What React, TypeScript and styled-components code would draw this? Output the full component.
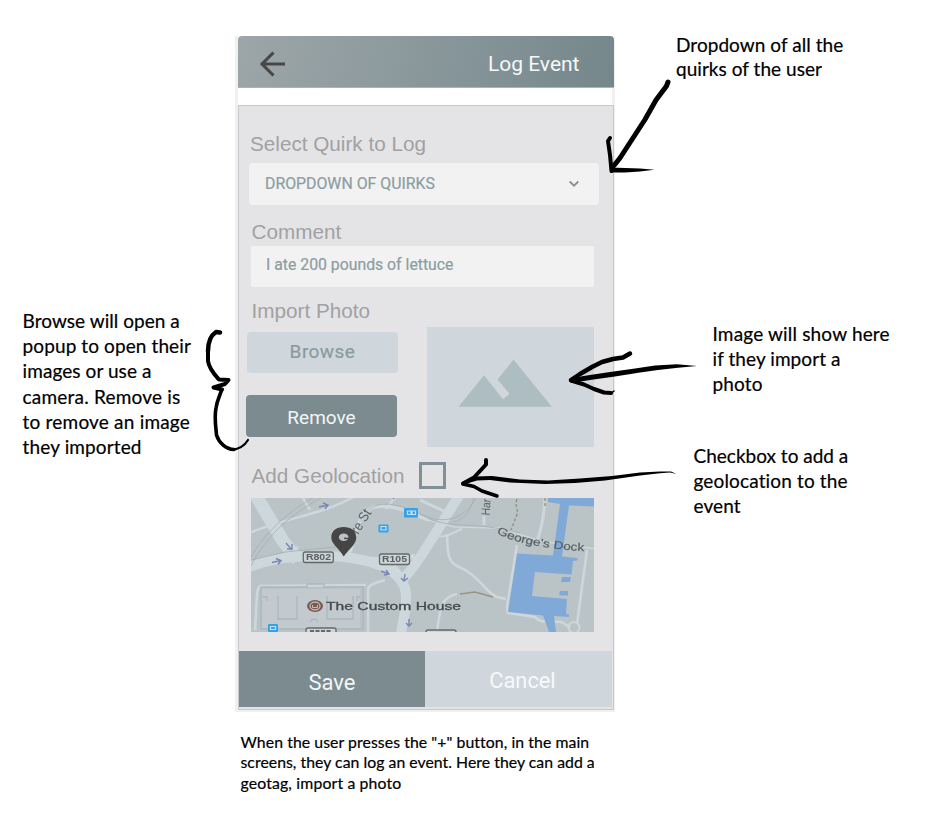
import React from 'react';
import styled, { createGlobalStyle, css } from 'styled-components';

const colors = {
  panel: '#e4e4e6',
  field: '#f2f2f2',
  slate: '#7b8b90',
  mist: '#cfd7dd',
  label: '#a1a1a2',
  value: '#8c9da1',
};

const GlobalStyle = createGlobalStyle`
  * { box-sizing: border-box; }
  body { margin: 0; background: #fff; }
`;

const Page = styled.main`
  position: relative;
  width: 926px;
  height: 830px;
  overflow: hidden;
  background: #fff;
`;

const Stage = styled.div`
  display: grid;
  grid-template-columns: 235px 380px 1fr;
  padding-top: 36px;
  height: 712px;
`;

/* ---- annotations ---- */

const LeftNotes = styled.aside`
  padding: 272px 0 0 22.6px;
`;

const RightNotes = styled.aside`
  display: flex;
  flex-direction: column;
  margin-top: -3px;
`;

const NoteBlock = styled.p<{ $size?: number; $leading: number; $indent?: number; $gap?: number }>`
  display: flex;
  flex-direction: column;
  margin: ${p => p.$gap ?? 0}px 0 0 ${p => p.$indent ?? 0}px;
  font-family: Lato, 'Liberation Sans', sans-serif;
  font-size: ${p => p.$size ?? 19}px;
  line-height: ${p => p.$leading}px;
  color: #000;
  -webkit-text-stroke: 0.2px #000;
`;

const NoteLine = styled.span<{ $tracking: number }>`
  white-space: nowrap;
  letter-spacing: ${p => p.$tracking}px;
`;

type Line = [text: string, tracking: number];

function Note({ lines, ...rest }: { lines: Line[]; $size?: number; $leading: number; $indent?: number; $gap?: number }) {
  return (
    <NoteBlock {...rest}>
      {lines.map(([text, tracking]) => (
        <NoteLine key={text} $tracking={tracking}>{text}</NoteLine>
      ))}
    </NoteBlock>
  );
}

/* ---- phone ---- */

const Phone = styled.section`
  display: flex;
  flex-direction: column;
  height: 676px;
  padding: 0 1px 2px 3px;
  background: #f0f0f0;
`;

const HeaderBack = styled.div`
  background: #fff;
  flex: none;
`;

const Header = styled.header`
  display: flex;
  align-items: center;
  justify-content: space-between;
  height: 52px;
  padding: 5px 34.5px 0 21px;
  border-radius: 4px 4px 0 0;
  border-bottom: 1px solid #a9b4b8;
  background: linear-gradient(105deg, #9da6a8 0%, #8a989c 48%, #75878c 100%);
`;

const Title = styled.h1`
  margin: 0;
  font: 400 21px/28px Roboto, sans-serif;
  color: #f6f8f8;
`;

const Strip = styled.div`
  height: 17px;
  width: 374px;
  background: #fff;
  flex: none;
`;

const Body = styled.div`
  display: flex;
  flex-direction: column;
  flex: 1;
  width: 376px;
  border: 1.5px solid #c8c8ce;
  background: ${colors.panel};
`;

const Form = styled.form`
  display: flex;
  flex-direction: column;
  height: 545px;
  padding: 25px 0 0 12.5px;
`;

const Label = styled.label<{ $gap?: number; $shift?: number }>`
  margin: ${p => p.$gap ?? 0}px 0 0 ${p => p.$shift ?? 0}px;
  font: 400 20.7px/26px 'Liberation Sans', Arial, sans-serif;
  color: ${colors.label};
  white-space: nowrap;
`;

const fieldBox = css`
  display: flex;
  align-items: center;
  justify-content: space-between;
  background: ${colors.field};
  font-family: Roboto, sans-serif;
  font-weight: 400;
  color: ${colors.value};
  -webkit-text-stroke: 0.2px ${colors.value};
`;

const Select = styled.div`
  ${fieldBox}
  width: 350px;
  height: 42px;
  margin: 6px 0 0 -2.5px;
  padding: 0 19px 2px 16px;
  border-radius: 4px;
  font-size: 15.85px;
`;

const TextField = styled.div`
  ${fieldBox}
  width: 343px;
  height: 41px;
  margin: 1px 0 0 -0.5px;
  padding: 0 15px 4px 15px;
  border-radius: 2px;
  font-size: 15.8px;
`;

const PhotoRow = styled.div`
  display: flex;
  align-items: flex-start;
  height: 120px;
  margin-top: 3px;
`;

const Buttons = styled.div`
  display: flex;
  flex-direction: column;
  gap: 22px;
  width: 181px;
  padding-top: 4.5px;
  margin-left: -5.5px;
`;

const Button = styled.button<{ $solid?: boolean }>`
  width: 151px;
  height: ${p => (p.$solid ? 42 : 41)}px;
  margin: 0 0 0 ${p => (p.$solid ? 0 : 1)}px;
  padding: ${p => (p.$solid ? '4px 0 0' : '0')};
  border: 0;
  border-radius: 4px;
  background: ${p => (p.$solid ? colors.slate : colors.mist)};
  color: ${p => (p.$solid ? '#f3f6f6' : '#8a9ba0')};
  font: 400 19px/24px Roboto, sans-serif;
  letter-spacing: ${p => (p.$solid ? 0 : 0.45)}px;
  -webkit-text-stroke: ${p => (p.$solid ? '0' : '0.2px #8a9ba0')};
`;

const PhotoFrame = styled.div`
  width: 167px;
  height: 120px;
  background: ${colors.mist};
`;

const GeoRow = styled.div`
  display: flex;
  align-items: center;
  height: 27px;
  margin: 15px 0 9px;
`;

const Checkbox = styled.span`
  width: 27px;
  height: 27px;
  margin-left: 14.5px;
  border: 3px solid #7f9096;
`;

const MapFrame = styled.div`
  width: 343px;
  height: 134px;
  margin-left: -1px;
  overflow: hidden;
`;

const Actions = styled.div`
  display: grid;
  grid-template-columns: 186px 187px;
  height: 56px;
  width: 373px;
`;

const Action = styled.button<{ $primary?: boolean }>`
  border: 0;
  padding: ${p => (p.$primary ? '7px 0 0' : '3px 0 0 8px')};
  background: ${p => (p.$primary ? colors.slate : colors.mist)};
  color: ${p => (p.$primary ? '#f3f5f5' : '#f6f9fa')};
  font: 400 ${p => (p.$primary ? 22 : 21.8)}px/28px Roboto, sans-serif;
`;

const Sketch = styled.svg`
  position: absolute;
  inset: 0;
  pointer-events: none;
`;

const BackArrow = () => (
  <svg width="27" height="26" viewBox="0 0 27 26" fill="none" stroke="#474747" strokeWidth="3.1">
    <path d="M26 13H4M14.5 1.5 3 13l11.5 11.5" />
  </svg>
);

const Chevron = () => (
  <svg width="12" height="8" viewBox="0 0 12 8" fill="none" stroke="#8b8f91" strokeWidth="1.8">
    <path d="M1.7 2.5 6 6.700l4.300-4.200" />
  </svg>
);

const Mountains = () => (
  <svg width="167" height="120" viewBox="427 327 167 120">
    <path fill="#aebdc1" d="M458.5 406.7 484 375.2 503 399.2 509.5 393.8 497.5 379.5 513.5 359.5 551.8 406.7Z" />
  </svg>
);

function StreetMap() {
  return (
    <svg width="343" height="134" viewBox="251 498 343 134" preserveAspectRatio="none">
      <defs>
        <filter id="soft" x="0" y="0" width="100%" height="100%">
          <feGaussianBlur stdDeviation="0.5" />
        </filter>
      </defs>
      <rect x="251" y="498" width="343" height="134" fill="#bac4c7" />
      <g filter="url(#soft)">
        {/* roads */}
        <g fill="none" stroke="#cdd8dc">
          <path strokeWidth="13" d="M255 494 283 541 298 560" />
          <path strokeWidth="10" d="M249 567C275 557 310 554 345 557C375 561 405 571 406 595C407 612 402 622 401 634" />
          <path strokeWidth="10" d="M403 579C416 566 428 545 460 494" />
          <path strokeWidth="5" d="M345 557C372 560 400 561 415 556" />
          <path strokeWidth="2.5" d="M249 533C285 518 325 514 355 496M280 556 298 547M300 493 310 510" />
          <path strokeWidth="3.5" d="M348 556C357 540 355 514 374 507C393 504 409 511 428 520" />
          <path strokeWidth="2.5" d="M386 509 397 495M385 580C372 584 368 585 368 590V632M366 585 260 586C256 588 257 600 255 630" />
          <path strokeWidth="1.5" d="M420 518 455 527 500 528 540 541 596 549" />
          <path strokeWidth="3" d="M484 525V516M545 497C544 520 540 533 537 541" />
          <path strokeWidth="2.5" d="M447 534C448 548 446 560 457 566C478 574 485 592 497 597L506 599M517 545 507 607 508 613 535 617C540 624 552 621 561 622L570 627M587 550 577 624M437 632C440 610 440 597 457 594" />
          <path strokeWidth="2" d="M436 536C447 538 454 532 462 529" />
          <circle cx="574" cy="627.5" r="5.5" strokeWidth="2" />
          <path strokeWidth="3" d="M420 500 446 512M394 565 403 576" />
        </g>
        <g fill="none" stroke="#a5aeb1" strokeWidth=".8">
          <path d="M251 566C265 538 289 514 325 496M251 557C264 535 286 512 315 497M251 560 285 552 335 547 357 526M360 521C375 490 410 509 432 520C455 528 478 522 520 533M420 514C450 528 468 514 477 496M453 522C465 520 471 510 474 497" />
        </g>
        {/* the custom house footprint */}
        <path fill="#c2cace" d="M262 589h98v39h-98z" />
        <g fill="none" stroke="#acb6c0" strokeWidth="1.3">
          <path d="M261 587H307V584H324V587H363V629H261ZM278 596V619H297V596M327 596V619H353V596" />
          <path d="M310 622q4-6 8 0M263 597h4v4M361 597h-4v4" />
        </g>
        {/* water */}
        <path fill="#81a9d8" d="M548 498H594V506.5L569 505.500L562 556.500L577.500 558V560.500L573 561L571.500 574.500L535 572L532 596L567 599L566 614L569 614.500V617L554 616L556 632H549L543 615.500L508 612L517 553.500L553 555.500L560 504L548 502Z" />
        <path fill="#81a9d8" d="M562 577h9l-1 5h-9zM560 591h8v4.500h-9z" />
        {/* footpaths */}
        <g fill="none" stroke="#96957f" strokeWidth="1.5">
          <path strokeDasharray="3 2" d="M517 499C514 508 520 509 516 517L511 530M545 498v8" />
          <path d="M460 594 475 592 493 597" />
        </g>
        {/* traffic arrows */}
        <g fill="none" stroke="#7a87b3" strokeWidth="1.4">
          <path d="M319 507l9-2m-5-2 5 2-3 4M272 562.500l9-2m-5-2 5 2-3 4M286 543l6 7m-5-1h5v-5M381 571l8 3m-3-4 3 4-5 1M405 574l-1 7m-3-3 3 3 4-3M409 619v7m-3-3 3 3 3-3M393 499l3-3" />
        </g>
        {/* transit stops */}
        <g fill="#35a2e8">
          <rect x="404" y="508" width="14" height="9.5" rx="1" />
          <rect x="378.5" y="524.5" width="10" height="8" rx="1" />
          <rect x="268" y="624" width="10" height="8" rx="1" />
        </g>
        <g fill="none" stroke="#c4e2f4" strokeWidth="1.2">
          <path d="M407.500 511h3.500v3.500h-3.500zM412 511h3.500v3.500H412zM381 526.500h5v3.500h-5zM270.500 626.500h5v3h-5z" />
        </g>
        {/* road shields */}
        <g fill="#cdd5d7" stroke="#62696b" strokeWidth="1.3">
          <rect x="303.3" y="552" width="30" height="10.5" rx="2" />
          <rect x="379.5" y="554" width="30" height="10.5" rx="2" />
          <rect x="306" y="628" width="30" height="10.5" rx="2" />
          <rect x="426" y="630" width="30" height="10.5" rx="2" />
        </g>
        <path d="M310 631h22" stroke="#62696b" strokeWidth="2" strokeDasharray="4 1.5" />
        <g fontFamily="'Liberation Sans', sans-serif" fill="#596063">
          <g fontSize="8.2" fontWeight="700">
            <text x="306" y="560.3" textLength="25" lengthAdjust="spacingAndGlyphs">R802</text>
            <text x="382" y="562.3" textLength="25" lengthAdjust="spacingAndGlyphs">R105</text>
          </g>
          <text transform="translate(358 535) rotate(-58)" fontSize="14" textLength="26" lengthAdjust="spacingAndGlyphs">re St</text>
          <text transform="translate(489.5 515.5) rotate(-86)" fontSize="12" textLength="16.5" lengthAdjust="spacingAndGlyphs">Har</text>
          <path id="dock" d="M496.500 533.500C513 541 527 544.500 547 547.500C563 549.500 572 551 594 551.500" fill="none" />
          <text fontSize="11" stroke="#596063" strokeWidth=".2"><textPath href="#dock" textLength="90" lengthAdjust="spacingAndGlyphs">George's Dock</textPath></text>
          <text x="326" y="610" fontSize="11.3" textLength="135" lengthAdjust="spacingAndGlyphs" fill="#44494b" stroke="#44494b" strokeWidth=".3">The Custom House</text>
        </g>
        <ellipse cx="315" cy="606" rx="8" ry="6" fill="#795b52" />
        <ellipse cx="315" cy="606" rx="5" ry="3.8" fill="none" stroke="#c9bfba" strokeWidth="1.2" />
        <path d="M312.500 605v2.500h5V605" fill="none" stroke="#c9bfba" />
        {/* pin */}
        <path fill="#454545" d="M343.700 556.500C338 547 331.300 544 331.300 537.500C331.300 531 336.500 527 343.700 527C351 527 356.300 531 356.300 537.500C356.300 544 350 548 343.700 556.500Z" />
        <ellipse cx="343.7" cy="537.3" rx="4.8" ry="3.8" fill="#bcc3c5" />
        <path d="M344 537.700h5v1.400h-5z" fill="#454545" />
      </g>
    </svg>
  );
}

/* Hand-drawn pointers that connect the notes to the phone. */
function Pointers() {
  return (
    <Sketch width="926" height="830" viewBox="0 0 926 830" fill="#000" stroke="#000" strokeLinecap="round" strokeLinejoin="round">
      <g fill="none">
        <path strokeWidth="5" d="M668 82 666.500 86 656 100 645 119.500 632 139.500 620 158 614 165.500" />
        <path strokeWidth="4" d="M610 138 608 141 610 155 611.500 171" />
        <path strokeWidth="4.5" d="M630 353.500 623 357.500 613 359 602 362 592 367 580 374 571 380" />
        <path strokeWidth="4" d="M571 380.500 584 384.500 594 389 604 392.500 611 393" />
        <path strokeWidth="4" d="M486 460V464.500L480 471 474 477.500 463 483.500" />
        <path strokeWidth="3.5" d="M463 484 474 486.500 482 491 497 496" />
        <path strokeWidth="4.5" d="M220 332.500 216 332C210 336 208 343 208 351" />
        <path strokeWidth="4" d="M208 350V361C209 369 215 375 219 379.500L228.500 380 225 384 213.500 387.500 222 389.500" />
        <path strokeWidth="3.6" d="M221.500 390C220 396 217 400 216 408C214 418 216 428 216.500 435C219 443 226 449 234 449.500" />
        <path strokeWidth="2.2" d="M232 449.800C239 449 245 445 248 440" />
        <path strokeWidth="1.5" d="M611 393.500 614 391" />
      </g>
      <g stroke="none">
        <path d="M610 167.500 625 168 640 168.600 654.500 169.800 640 171.500 625 172.500 610 172.500Z" />
        <path d="M571 378 590 375 610 372 635 368.500 655 365.600 677 364.300 697 366 678 367.800 658 370 640 372.500 615 376.500 590 380 571 383Z" />
        <path d="M462 482 475 476.500 492 476 520 479.500 548 480.500 580 478.500 612 476 640 472.500 660 471.500 671 471.500 676.500 474 670 472.500 660 473.300 640 475.500 605 480.500 575 483 545 484 510 482.500 490 480 477 480.500 462 485Z" />
      </g>
    </Sketch>
  );
}

export default function App() {
  return (
    <>
      <GlobalStyle />
      <Page>
        <Stage>
          <LeftNotes>
            <Note $leading={25.2} lines={[
              ['Browse will open a', 0.04],
              ['popup to open their', 0.1],
              ['images or use a', 0.07],
              ['camera. Remove is', 0.2],
              ['to remove an image', 0.2],
              ['they imported', 0.13],
            ]} />
          </LeftNotes>
          <Phone>
            <HeaderBack>
              <Header>
                <BackArrow />
                <Title>Log Event</Title>
              </Header>
            </HeaderBack>
            <Strip />
            <Body>
              <Form>
                <Label $shift={-1.5}>Select Quirk to Log</Label>
                <Select>
                  DROPDOWN OF QUIRKS
                  <Chevron />
                </Select>
                <Label $gap={14}>Comment</Label>
                <TextField>I ate 200 pounds of lettuce</TextField>
                <Label $gap={11}>Import Photo</Label>
                <PhotoRow>
                  <Buttons>
                    <Button type="button">Browse</Button>
                    <Button type="button" $solid>Remove</Button>
                  </Buttons>
                  <PhotoFrame><Mountains /></PhotoFrame>
                </PhotoRow>
                <GeoRow>
                  <Label>Add Geolocation</Label>
                  <Checkbox role="checkbox" aria-checked="false" />
                </GeoRow>
                <MapFrame><StreetMap /></MapFrame>
              </Form>
              <Actions>
                <Action $primary>Save</Action>
                <Action>Cancel</Action>
              </Actions>
            </Body>
          </Phone>
          <RightNotes>
            <Note $leading={24.3} $indent={61} lines={[
              ['Dropdown of all the', 0.05],
              ['quirks of the user', 0.04],
            ]} />
            <Note $leading={25} $indent={97.5} $gap={239.5} lines={[
              ['Image will show here', 0.17],
              ['if they import a', 0.08],
              ['photo', 0.15],
            ]} />
            <Note $leading={24.7} $indent={78.5} $gap={48} lines={[
              ['Checkbox to add a', 0],
              ['geolocation to the', 0.14],
              ['event', 0.1],
            ]} />
          </RightNotes>
        </Stage>
        <Note $size={15.8} $leading={20.8} $indent={240.5} $gap={19.6} lines={[
          ['When the user presses the "+" button, in the main', 0.07],
          ['screens, they can log an event. Here they can add a', 0.03],
          ['geotag, import a photo', 0.15],
        ]} />
        <Pointers />
      </Page>
    </>
  );
}
